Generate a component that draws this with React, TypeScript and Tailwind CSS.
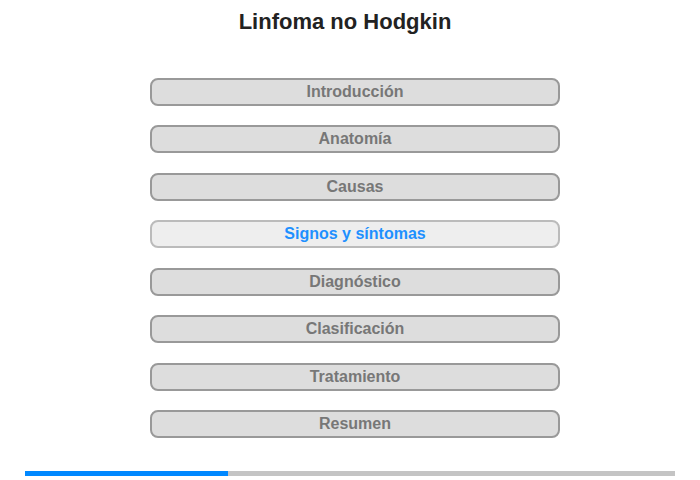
import React from "react";

const items = [
  "Introducción",
  "Anatomía",
  "Causas",
  "Signos y síntomas",
  "Diagnóstico",
  "Clasificación",
  "Tratamiento",
  "Resumen",
];

export default function App() {
  return (
    <div
      className="w-[700px] h-[480px] bg-white flex flex-col"
      style={{ fontFamily: '"Liberation Sans", Arial, sans-serif' }}
    >
      <div className="w-[690px] mt-[9px] flex justify-center">
        <h1 className="text-[22px] leading-[26px] font-bold text-[#222]">
          Linfoma no Hodgkin
        </h1>
      </div>
      <div className="ml-[150px] mt-[43px] flex flex-col">
        {items.map((t, i) => {
          const active = i === 3;
          const gap = i === 0 ? "" : i % 2 === 1 ? "mt-[19px]" : "mt-[20px]";
          return (
            <div
              key={t}
              className={
                (active
                  ? "border-[#bbb] bg-[#eee] text-[#1e90ff] "
                  : "border-[#999] bg-[#ddd] text-[#777] ") +
                "w-[410px] h-[28px] rounded-[8px] border-2 flex items-center justify-center text-[16px] font-bold " +
                gap
              }
            >
              {t}
            </div>
          );
        })}
      </div>
      <div className="ml-[25px] mt-[33px] w-[650px] h-[5px] bg-[#c4c4c4] flex">
        <div className="w-[203px] h-full bg-[#0088ff]" />
      </div>
    </div>
  );
}
